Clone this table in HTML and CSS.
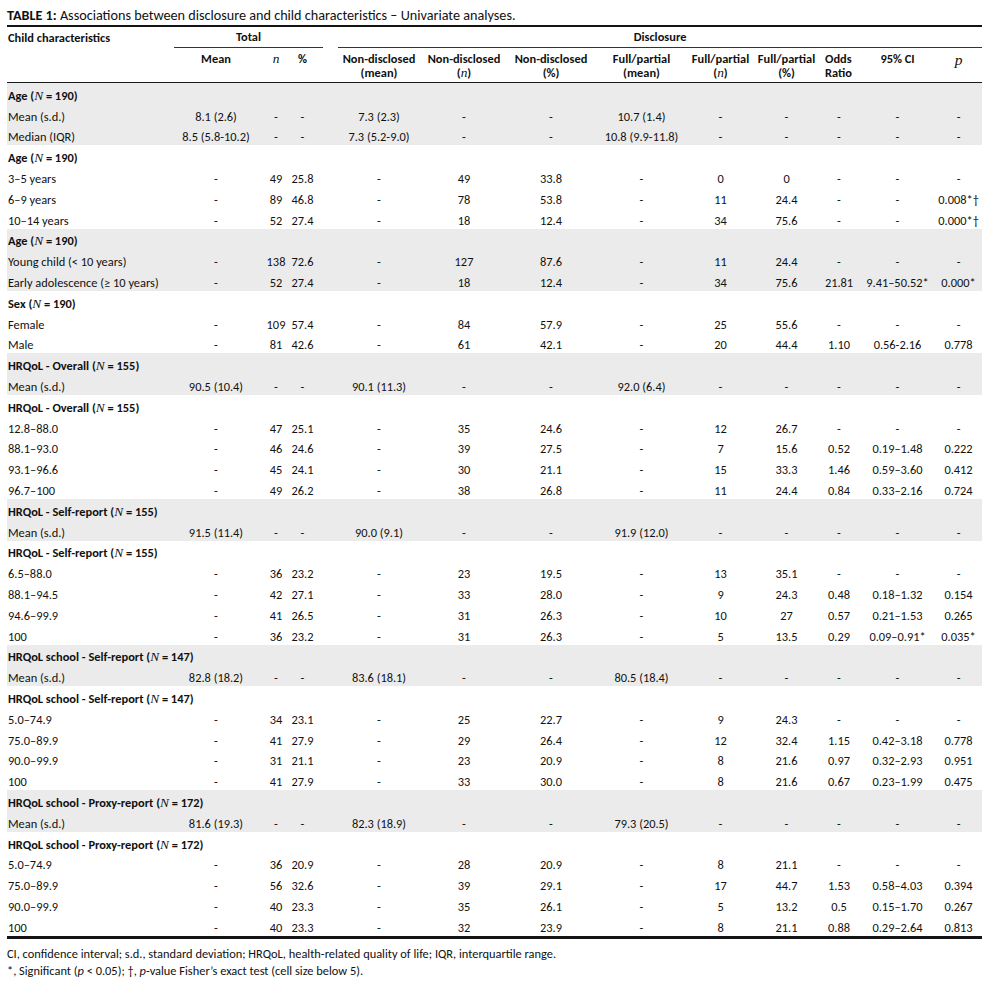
FILE: index.html
```html
<!DOCTYPE html>
<html>
<head>
<meta charset="utf-8">
<link rel="stylesheet" href="styles.css">
</head>
<body>
<div class="page">
<div class="title"><b>TABLE 1:</b> Associations between disclosure and child characteristics – Univariate analyses.</div>
<table class="tbl">
<colgroup>
<col class="c-label"><col class="c-mean"><col class="c-n"><col class="c-pct">
<col class="c-ndm"><col class="c-ndn"><col class="c-ndp"><col class="c-fpm"><col class="c-fpn"><col class="c-fpp"><col class="c-or"><col class="c-ci"><col class="c-p">
</colgroup>
<thead>
<tr class="h1">
<th class="lbl">Child characteristics</th>
<th colspan="3" class="grp"><div class="grp-line total">Total</div></th>
<th colspan="9" class="grp"><div class="grp-line disc">Disclosure</div></th>
</tr>
<tr class="h2">
<th></th>
<th>Mean</th>
<th><i class="v">n</i></th>
<th class="pct">%</th>
<th class="ndm">Non-disclosed<br>(mean)</th>
<th>Non-disclosed<br>(<i class="v">n</i>)</th>
<th>Non-disclosed<br>(%)</th>
<th>Full/partial<br>(mean)</th>
<th>Full/partial<br>(<i class="v">n</i>)</th>
<th>Full/partial<br>(%)</th>
<th class="or">Odds<br>Ratio</th>
<th>95% CI</th>
<th><i class="v pv">p</i></th>
</tr>
</thead>
<tbody>
<tr class="g"><td class="lbl hd" colspan="13">Age (<i class="v">N</i> = 190)</td></tr>
<tr class="g"><td class="lbl">Mean (s.d.)</td><td>8.1 (2.6)</td><td>-</td><td class="pct">-</td><td class="ndm">7.3 (2.3)</td><td>-</td><td>-</td><td>10.7 (1.4)</td><td>-</td><td>-</td><td>-</td><td>-</td><td>-</td></tr>
<tr class="g"><td class="lbl">Median (IQR)</td><td>8.5 (5.8-10.2)</td><td>-</td><td class="pct">-</td><td class="ndm">7.3 (5.2-9.0)</td><td>-</td><td>-</td><td>10.8 (9.9-11.8)</td><td>-</td><td>-</td><td>-</td><td>-</td><td>-</td></tr>
<tr><td class="lbl hd" colspan="13">Age (<i class="v">N</i> = 190)</td></tr>
<tr><td class="lbl">3–5 years</td><td>-</td><td>49</td><td class="pct">25.8</td><td class="ndm">-</td><td>49</td><td>33.8</td><td>-</td><td>0</td><td>0</td><td>-</td><td>-</td><td>-</td></tr>
<tr><td class="lbl">6–9 years</td><td>-</td><td>89</td><td class="pct">46.8</td><td class="ndm">-</td><td>78</td><td>53.8</td><td>-</td><td>11</td><td>24.4</td><td>-</td><td>-</td><td>0.008*†</td></tr>
<tr><td class="lbl">10–14 years</td><td>-</td><td>52</td><td class="pct">27.4</td><td class="ndm">-</td><td>18</td><td>12.4</td><td>-</td><td>34</td><td>75.6</td><td>-</td><td>-</td><td>0.000*†</td></tr>
<tr class="g"><td class="lbl hd" colspan="13">Age (<i class="v">N</i> = 190)</td></tr>
<tr class="g"><td class="lbl">Young child (&lt; 10 years)</td><td>-</td><td>138</td><td class="pct">72.6</td><td class="ndm">-</td><td>127</td><td>87.6</td><td>-</td><td>11</td><td>24.4</td><td>-</td><td>-</td><td>-</td></tr>
<tr class="g"><td class="lbl">Early adolescence (≥ 10 years)</td><td>-</td><td>52</td><td class="pct">27.4</td><td class="ndm">-</td><td>18</td><td>12.4</td><td>-</td><td>34</td><td>75.6</td><td>21.81</td><td>9.41–50.52*</td><td>0.000*</td></tr>
<tr><td class="lbl hd" colspan="13">Sex (<i class="v">N</i> = 190)</td></tr>
<tr><td class="lbl">Female</td><td>-</td><td>109</td><td class="pct">57.4</td><td class="ndm">-</td><td>84</td><td>57.9</td><td>-</td><td>25</td><td>55.6</td><td>-</td><td>-</td><td>-</td></tr>
<tr><td class="lbl">Male</td><td>-</td><td>81</td><td class="pct">42.6</td><td class="ndm">-</td><td>61</td><td>42.1</td><td>-</td><td>20</td><td>44.4</td><td>1.10</td><td>0.56-2.16</td><td>0.778</td></tr>
<tr class="g"><td class="lbl hd" colspan="13">HRQoL - Overall (<i class="v">N</i> = 155)</td></tr>
<tr class="g"><td class="lbl">Mean (s.d.)</td><td>90.5 (10.4)</td><td>-</td><td class="pct">-</td><td class="ndm">90.1 (11.3)</td><td>-</td><td>-</td><td>92.0 (6.4)</td><td>-</td><td>-</td><td>-</td><td>-</td><td>-</td></tr>
<tr><td class="lbl hd" colspan="13">HRQoL - Overall (<i class="v">N</i> = 155)</td></tr>
<tr><td class="lbl">12.8–88.0</td><td>-</td><td>47</td><td class="pct">25.1</td><td class="ndm">-</td><td>35</td><td>24.6</td><td>-</td><td>12</td><td>26.7</td><td>-</td><td>-</td><td>-</td></tr>
<tr><td class="lbl">88.1–93.0</td><td>-</td><td>46</td><td class="pct">24.6</td><td class="ndm">-</td><td>39</td><td>27.5</td><td>-</td><td>7</td><td>15.6</td><td>0.52</td><td>0.19–1.48</td><td>0.222</td></tr>
<tr><td class="lbl">93.1–96.6</td><td>-</td><td>45</td><td class="pct">24.1</td><td class="ndm">-</td><td>30</td><td>21.1</td><td>-</td><td>15</td><td>33.3</td><td>1.46</td><td>0.59–3.60</td><td>0.412</td></tr>
<tr><td class="lbl">96.7–100</td><td>-</td><td>49</td><td class="pct">26.2</td><td class="ndm">-</td><td>38</td><td>26.8</td><td>-</td><td>11</td><td>24.4</td><td>0.84</td><td>0.33–2.16</td><td>0.724</td></tr>
<tr class="g"><td class="lbl hd" colspan="13">HRQoL - Self-report (<i class="v">N</i> = 155)</td></tr>
<tr class="g"><td class="lbl">Mean (s.d.)</td><td>91.5 (11.4)</td><td>-</td><td class="pct">-</td><td class="ndm">90.0 (9.1)</td><td>-</td><td>-</td><td>91.9 (12.0)</td><td>-</td><td>-</td><td>-</td><td>-</td><td>-</td></tr>
<tr><td class="lbl hd" colspan="13">HRQoL - Self-report (<i class="v">N</i> = 155)</td></tr>
<tr><td class="lbl">6.5–88.0</td><td>-</td><td>36</td><td class="pct">23.2</td><td class="ndm">-</td><td>23</td><td>19.5</td><td>-</td><td>13</td><td>35.1</td><td>-</td><td>-</td><td>-</td></tr>
<tr><td class="lbl">88.1–94.5</td><td>-</td><td>42</td><td class="pct">27.1</td><td class="ndm">-</td><td>33</td><td>28.0</td><td>-</td><td>9</td><td>24.3</td><td>0.48</td><td>0.18–1.32</td><td>0.154</td></tr>
<tr><td class="lbl">94.6–99.9</td><td>-</td><td>41</td><td class="pct">26.5</td><td class="ndm">-</td><td>31</td><td>26.3</td><td>-</td><td>10</td><td>27</td><td>0.57</td><td>0.21–1.53</td><td>0.265</td></tr>
<tr><td class="lbl">100</td><td>-</td><td>36</td><td class="pct">23.2</td><td class="ndm">-</td><td>31</td><td>26.3</td><td>-</td><td>5</td><td>13.5</td><td>0.29</td><td>0.09–0.91*</td><td>0.035*</td></tr>
<tr class="g"><td class="lbl hd" colspan="13">HRQoL school - Self-report (<i class="v">N</i> = 147)</td></tr>
<tr class="g"><td class="lbl">Mean (s.d.)</td><td>82.8 (18.2)</td><td>-</td><td class="pct">-</td><td class="ndm">83.6 (18.1)</td><td>-</td><td>-</td><td>80.5 (18.4)</td><td>-</td><td>-</td><td>-</td><td>-</td><td>-</td></tr>
<tr><td class="lbl hd" colspan="13">HRQoL school - Self-report (<i class="v">N</i> = 147)</td></tr>
<tr><td class="lbl">5.0–74.9</td><td>-</td><td>34</td><td class="pct">23.1</td><td class="ndm">-</td><td>25</td><td>22.7</td><td>-</td><td>9</td><td>24.3</td><td>-</td><td>-</td><td>-</td></tr>
<tr><td class="lbl">75.0–89.9</td><td>-</td><td>41</td><td class="pct">27.9</td><td class="ndm">-</td><td>29</td><td>26.4</td><td>-</td><td>12</td><td>32.4</td><td>1.15</td><td>0.42–3.18</td><td>0.778</td></tr>
<tr><td class="lbl">90.0–99.9</td><td>-</td><td>31</td><td class="pct">21.1</td><td class="ndm">-</td><td>23</td><td>20.9</td><td>-</td><td>8</td><td>21.6</td><td>0.97</td><td>0.32–2.93</td><td>0.951</td></tr>
<tr><td class="lbl">100</td><td>-</td><td>41</td><td class="pct">27.9</td><td class="ndm">-</td><td>33</td><td>30.0</td><td>-</td><td>8</td><td>21.6</td><td>0.67</td><td>0.23–1.99</td><td>0.475</td></tr>
<tr class="g"><td class="lbl hd" colspan="13">HRQoL school - Proxy-report (<i class="v">N</i> = 172)</td></tr>
<tr class="g"><td class="lbl">Mean (s.d.)</td><td>81.6 (19.3)</td><td>-</td><td class="pct">-</td><td class="ndm">82.3 (18.9)</td><td>-</td><td>-</td><td>79.3 (20.5)</td><td>-</td><td>-</td><td>-</td><td>-</td><td>-</td></tr>
<tr><td class="lbl hd" colspan="13">HRQoL school - Proxy-report (<i class="v">N</i> = 172)</td></tr>
<tr><td class="lbl">5.0–74.9</td><td>-</td><td>36</td><td class="pct">20.9</td><td class="ndm">-</td><td>28</td><td>20.9</td><td>-</td><td>8</td><td>21.1</td><td>-</td><td>-</td><td>-</td></tr>
<tr><td class="lbl">75.0–89.9</td><td>-</td><td>56</td><td class="pct">32.6</td><td class="ndm">-</td><td>39</td><td>29.1</td><td>-</td><td>17</td><td>44.7</td><td>1.53</td><td>0.58–4.03</td><td>0.394</td></tr>
<tr><td class="lbl">90.0–99.9</td><td>-</td><td>40</td><td class="pct">23.3</td><td class="ndm">-</td><td>35</td><td>26.1</td><td>-</td><td>5</td><td>13.2</td><td>0.5</td><td>0.15–1.70</td><td>0.267</td></tr>
<tr><td class="lbl">100</td><td>-</td><td>40</td><td class="pct">23.3</td><td class="ndm">-</td><td>32</td><td>23.9</td><td>-</td><td>8</td><td>21.1</td><td>0.88</td><td>0.29–2.64</td><td>0.813</td></tr>
</tbody>
</table>
<div class="notes">
<p>CI, confidence interval; s.d., standard deviation; HRQoL, health-related quality of life; IQR, interquartile range.</p>
<p>*, Significant (<i>p</i> &lt; 0.05); †, <i>p</i>-value Fisher’s exact test (cell size below 5).</p>
</div>
</div>
</body>
</html>
```
FILE: styles.css
```css
body {
  margin: 0;
  background: #ffffff;
  color: #111111;
  font-family: Carlito, Lato, "Liberation Sans", sans-serif;
}
.page {
  width: 975px;
  margin-left: 7px;
  padding-top: 7px;
}
.title {
  font-size: 14.2px;
  line-height: 16px;
  height: 18px;
  white-space: nowrap;
}
.tbl {
  width: 975px;
  table-layout: fixed;
  border-collapse: separate;
  border-spacing: 0;
  border-top: 2.5px solid #141414;
  border-bottom: 3px solid #141414;
  font-size: 12.4px;
}
.c-label { width: 163px; }
.c-mean { width: 92px; }
.c-n { width: 28px; }
.c-pct { width: 40px; }
.c-ndm { width: 93px; }
.c-ndn { width: 82px; }
.c-ndp { width: 92px; }
.c-fpm { width: 89px; }
.c-fpn { width: 69px; }
.c-fpp { width: 63px; }
.c-or { width: 42px; }
.c-ci { width: 75px; }
.c-p { width: 47px; }

.tbl th, .tbl td {
  padding: 0;
  text-align: center;
  white-space: nowrap;
}
.tbl th {
  font-weight: bold;
}
.h1 th {
  height: 21px;
  vertical-align: bottom;
}
.h1 th.lbl {
  text-align: left;
  vertical-align: middle;
  padding-left: 1px;
}
.grp-line {
  height: 20px;
  line-height: 20px;
  border-bottom: 1px solid #333;
}
.grp-line.total { margin: 0 7px 0 4px; }
.grp-line.disc { margin-left: 8px; }
.h2 th {
  height: 30px;
  padding-top: 4px;
  vertical-align: top;
  line-height: 13.5px;
  border-bottom: 1.5px solid #1a1a1a;
}
.tbl .pct { padding-right: 15px; }
.tbl .ndm { padding-left: 5px; }
.tbl .or { text-align: left; padding-left: 7px; }
.v {
  font-family: "Liberation Serif", serif;
  font-style: italic;
  font-weight: normal;
  font-size: 1.08em;
  line-height: 1;
}
.pv { font-size: 1.25em; }
.tbl tbody tr {
  height: 20.8px;
}
.tbl td {
  padding-top: 5px;
  line-height: 14px;
  vertical-align: middle;
}
.tbl td.lbl {
  text-align: left;
  padding-left: 1px;
}
.tbl td.hd {
  font-weight: bold;
}
.tbl tr.g td {
  background: #ebebeb;
}
.notes {
  padding-top: 6px;
  font-size: 12.4px;
  line-height: 17px;
}
.notes p {
  margin: 0;
}
```
